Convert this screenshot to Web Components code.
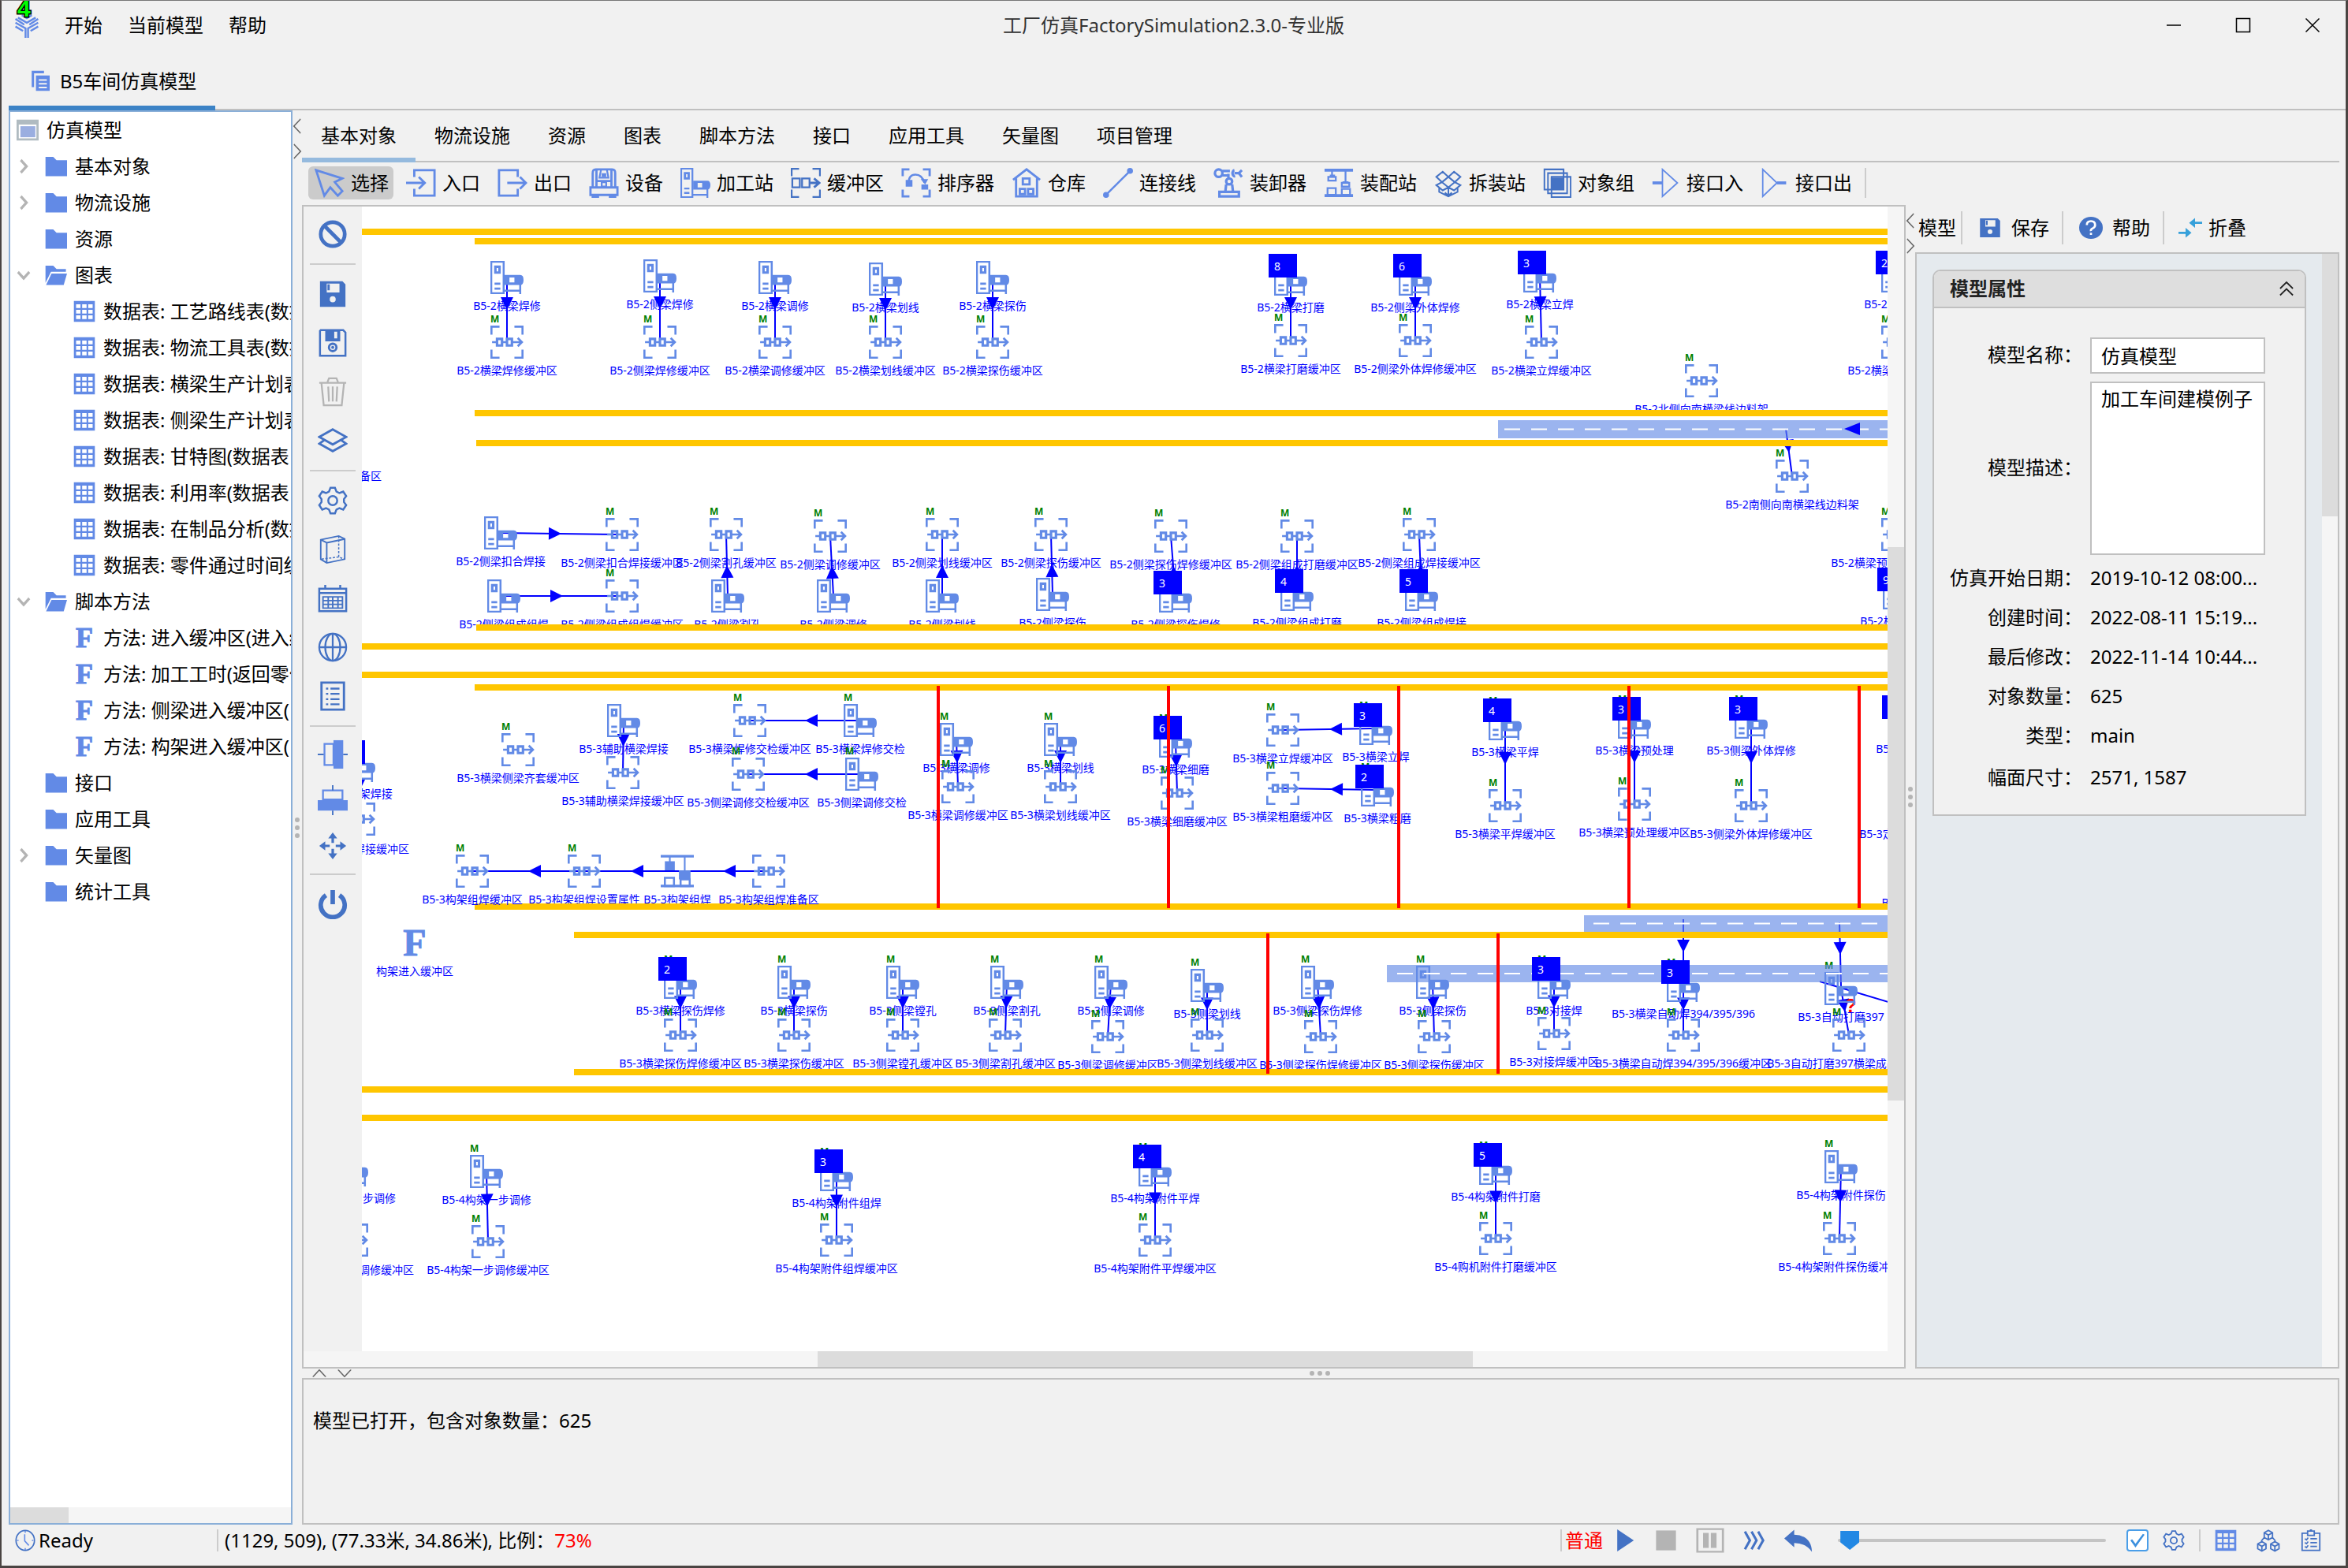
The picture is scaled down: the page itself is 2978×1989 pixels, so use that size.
<!DOCTYPE html>
<html lang="zh-CN">
<head>
<meta charset="utf-8">
<title>工厂仿真FactorySimulation2.3.0-专业版</title>
<style>
  html, body {
    margin: 0;
    height: 100%;
  }

  body {
    --line: #c0c0c0;
    --face: #f1f1f1;
    --blue: #628ae6;
    --navy: #4472c4;
    --thumb: #dcdcdc;
    --track: #f5f5f5;
    box-sizing: border-box;
    border: solid #4a4442;
    border-width: 1px 3px 3px 2px;
    border-top-color: #777;
    background: var(--face);
    color: #000;
    font: 24px/36px "Noto Sans", "Noto Sans CJK SC", sans-serif;
    overflow: hidden;
  }
</style>
</head>
<body>
<sim-app></sim-app>

<script>
const css = `
<style>
  *, *::before { box-sizing: border-box; }
  button {
    display: flex;
    align-items: center;
    padding: 0;
    border: none;
    background: none;
    font: inherit;
    color: inherit;
    white-space: nowrap;
  }
</style>
`

const define = (name, html, setup) => {
  customElements.define(name, class extends HTMLElement {
    connectedCallback () {
      if (this.shadowRoot) return
      this.attachShadow({ mode: 'open' })
      this.shadowRoot.innerHTML = css + (typeof html === 'function' ? html(this) : html)
      if (setup) setup(this, this.shadowRoot)
    }
  })
}

// icons are drawn in a 40x40 box, B = light blue, N = navy
const B = '#628ae6'
const N = '#4472c4'
const G = '#b4b4b4'
const line = (color, width, d) => `<path fill="none" stroke="${color}" stroke-width="${width}" d="${d}"/>`
const fill = (color, d) => `<path fill="${color}" fill-rule="evenodd" d="${d}"/>`

const machine = line(B, 2.4, 'M1 1H16V39H1Z') + line(B, 3, 'M6 7H11V14H6Z') + line(B, 2.6, 'M5 27.500H12M5 33.500H12') +
  fill(B, 'M17 17H36Q40 17 40 23T36 29H17ZM23 20V26H29V20Z') + line(B, 2.4, 'M36 28V40M16 36H37')
const corners = (color, width) => line(color, width, 'M1 11V1H11M29 1H39V11M39 29V39H29M11 39H1V29')
const gear = (color) => line(color, 2.6, 'M17 3H23L25 8L29 10L34 8L38 14L35 18V22L38 26L34 32L29 30L25 32L23 37H17L15 32L11 30L6 32L2 26L5 22V18L2 14L6 8L11 10L15 8Z') +
  `<circle cx="20" cy="20" r="6" fill="none" stroke="${color}" stroke-width="2.6"/>`
const grid = (color) => fill(color, 'M1 1H39V39H1ZM5 7V14H13V7ZM16 7V14H24V7ZM27 7V14H35V7ZM5 17V24H13V17ZM16 17V24H24V17ZM27 17V24H35V17ZM5 27V34H13V27ZM16 27V34H24V27ZM27 27V34H35V27Z')

const icons = {
  machine,
  station: machine,
  buffer: corners(B, 3) + line(B, 3, 'M8 16H14V24H8ZM20 16H26V24H20Z') + line(B, 2.6, 'M2 20H8M14 20H20M26 20H38M33 15L38 20L33 25'),
  zone: corners(N, 2.6) + line(N, 2.4, 'M2 14H12V26H2ZM15 14H25V26H15Z') + line(N, 3, 'M26 20H38M31 14L38 20L31 26'),
  assembly: line(B, 3, 'M0 2H40M0 38H40') + line(B, 2, 'M11 2V10M29 2V20') + fill(B, 'M5 8H17V19H5ZM22 19H36V30H22Z') + line(B, 2.4, 'M5 28H16V38H5ZM24 30H35V38H24Z'),
  select: line(B, 3, 'M2 3L37 14L27 19L37 31L31 37L21 26L13 37Z'),
  enter: line(B, 3, 'M11 12V3H38V37H11V28M0 20H25M17 12L25 20L17 28'),
  exit: line(B, 3, 'M27 12V3H2V37H27V28M13 20H38M30 12L38 20L30 28'),
  device: line(B, 3, 'M5 26V7Q5 2 9 2H31Q35 2 35 7V26M10 3V25M30 3V25M2 26H38V36H2ZM5 36V39H12V36M28 36V39H35V36') + line(B, 2.4, 'M16 3L14 13H26L24 3M17 19H23V25H17Z') + fill(B, 'M17 7H23V12H17ZM10 16H30V19H10Z'),
  sorter: line(B, 3, 'M2 11V2H11M29 2H38V11M38 29V38H29M11 38H2V29') + line(B, 2.6, 'M10 20Q10 9 19 9T31 20') + fill(B, 'M6 16H15V25H6ZM27 22H36V29H27ZM26 15L36 15L32 22Z'),
  store: line(B, 3, 'M2 16L20 2L38 16M6 14V38H34V14') + line(B, 3, 'M15 14H24V22H15ZM11 28H18V35H11ZM22 28H29V35H22Z'),
  link: line(B, 2.6, 'M4 36L36 4') + fill(B, 'M0 36a4 4 0 1 0 8 0a4 4 0 1 0-8 0M32 4a4 4 0 1 0 8 0a4 4 0 1 0-8 0'),
  loader: line(B, 3.4, 'M2 7a5 5 0 1 0 10 0a5 5 0 1 0-10 0M11 4H22M11 10H20M17 18a4 4 0 1 0 8 0a4 4 0 1 0-8 0M20 8V14M17 22L16 31M25 22L26 31M8 38H34V32H8ZM28 7H36M38 3L34 7L38 12M28 3a3 4 0 1 0 1 8'),
  fitting: line(B, 4, 'M1 3H39M1 37H39') + line(B, 2.4, 'M11 3V12M29 3V18M6 12H16V17H6ZM24 20H34V25H24ZM5 27H16V36H5ZM24 28H35V36H24Z') + fill(B, 'M8 9H15V13H8ZM25 18H33V21H25Z'),
  unpack: line(N, 2.2, 'M12 5L20 12L11 19L3 12ZM28 5L20 12L29 19L37 12ZM11 19L20 26L12 30L3 23ZM29 19L20 26L28 30L37 23ZM20 12L29 19L20 26L11 19ZM7 27V32L20 38L33 32V27M20 27V38M15 33L20 37L25 33'),
  group: line(N, 2.2, 'M2 2H29V29H2ZM7 7H34V34H7ZM12 12H39V39H12Z') + fill(N, 'M11 13H30V29H11Z'),
  portin: line(B, 2, 'M15 2V38L36 20Z') + line(B, 4, 'M1 20H15'),
  portout: line(B, 2, 'M3 2V38L23 20Z') + line(B, 4, 'M23 20H36'),
  folder: fill(B, 'M1 3H15L21 9H40V38H1Z'),
  open: fill(B, 'M1 3H15L21 9H38V14H11L1 34ZM12 17H40L34 38H2Z'),
  root: fill('#b0bbc1', 'M0 1H40V39H0ZM4 10V35H36V10Z') + fill('#9aaee0', 'M7 13H34V33H7Z'),
  table: grid(B),
  pages: fill(B, 'M2 1H28V6H7V32H2ZM11 10H40V39H11ZM17 17V20H34V17ZM17 24V27H34V24ZM17 31V34H34V31Z'),
  logo: line(B, 3, 'M18 40V25L2 16M22 40V25L38 16M2 10L16 19M38 10L24 19M2 22L14 29M38 22L26 29M6 8L20 16L34 8M12 4L20 9L28 4'),
  ban: `<circle cx="20" cy="20" r="16" fill="none" stroke="${N}" stroke-width="5"/>` + line(N, 5, 'M9 9L31 31'),
  disk: fill(N, 'M3 3H33L37 7V37H3ZM12 6V18H29V6ZM16 27a4 4 0 1 0 8 0a4 4 0 1 0-8 0') + fill(N, 'M13 7H16V15H13Z'),
  disk2: line(N, 2.6, 'M4 3H34L37 6V37H3V4Z') + fill(N, 'M10 3H30V18H10ZM22 5V14H26V5Z') + `<circle cx="20" cy="26" r="5" fill="none" stroke="${N}" stroke-width="3"/><circle cx="20" cy="26" r="2" fill="${N}"/>`,
  trash: line(G, 2.4, 'M2 8H38M13 7L15 2H25L27 7M5 9L8 38H32L35 9M14 13L15 33M20 13V33M26 13L25 33'),
  layers: line(N, 3, 'M20 5L38 15L20 25L2 15ZM9 19L2 24L20 34L38 24L31 19'),
  gear: gear(N),
  cube: line(N, 2, 'M4 7L28 2L36 6V33L12 38L4 33ZM4 7L12 11V38M12 11L36 6') + `<path fill="none" stroke="${N}" stroke-width="1.6" stroke-dasharray="3 2" d="M28 2V30L36 33M28 30L4 33"/>`,
  calendar: line(N, 2.6, 'M2 7H38V37H2ZM2 13H38M10 2V8M30 2V8') + line(N, 2, 'M7 18H33V33H7ZM7 23H33M7 28H33M14 18V33M20 18V33M27 18V33'),
  globe: `<g fill="none" stroke="${N}" stroke-width="2.4"><circle cx="20" cy="20" r="18"/><ellipse cx="20" cy="20" rx="10" ry="18"/><path d="M20 2V38M2 20H38"/></g>`,
  list: line(N, 3, 'M5 2H35V38H5Z') + line(N, 2.4, 'M11 10H14M17 10H29M11 17H14M17 17H29M11 24H14M17 24H29M11 31H14M17 31H29'),
  alignv: line(B, 2.4, 'M9 6H21V34H9Z') + fill(B, 'M21 1H34V39H21Z') + line(N, 2, 'M0 20H8M34 20H40'),
  alignh: line(B, 2.4, 'M7 7H33V19H7Z') + fill(B, 'M0 20H40V34H0Z') + line(N, 2, 'M20 0V7M20 34V40'),
  move: line(N, 3.4, 'M20 8V16M20 24V32M8 20H16M24 20H32') + fill(N, 'M20 2L26 10H14ZM20 38L26 30H14ZM2 20L10 14V26ZM38 20L30 14V26Z'),
  power: line(N, 6, 'M11 8A16 16 0 1 0 29 8M20 1V20'),
  help: `<circle cx="20" cy="20" r="20" fill="${N}"/>` + line('#fff', 3.6, 'M13 15Q13 8 20 8T27 15Q27 19 23 21T20 26M20 29V33'),
  fold: line('#36a0da', 4, 'M0 29H14M26 11H40') + fill('#36a0da', 'M12 20L22 29L12 38ZM28 2L18 11L28 20Z'),
  less: line('#666', 4, 'M34 2L6 20L34 38'),
  more: line('#666', 4, 'M6 2L34 20L6 38'),
  up: line('#666', 4, 'M2 38L20 3L38 38'),
  down: line('#666', 4, 'M2 2L20 37L38 2'),
  twist: line(G, 7, 'M12 4L28 20L12 36'),
  twistopen: line(G, 7, 'M4 12L20 28L36 12'),
  folds: line('#222', 4, 'M2 20L20 4L38 20M2 37L20 21L38 37'),
  min: line('#000', 3, 'M2 20H38'),
  max: line('#000', 3, 'M3 3H37V37H3Z'),
  close: line('#000', 3, 'M3 3L37 37M37 3L3 37'),
  clock: `<circle cx="20" cy="20" r="18" fill="none" stroke="${N}" stroke-width="2.600"/>` + line(B, 2.4, 'M19 9V21L27 29M20 3V6M20 34V37M4 20H7M33 20H36'),
  play: fill(N, 'M6 0L36 20L6 40Z'),
  stop: fill(G, 'M2 2H38V38H2Z'),
  pause: line(G, 3, 'M2 2H38V38H2Z') + fill(G, 'M10 8H18V32H10ZM21 8H29V32H21Z'),
  fast: line(N, 4.4, 'M3 4L12 20L3 36M15 4L24 20L15 36M27 4L36 20L27 36'),
  undo: fill(N, 'M0 17L14 3V11Q38 12 39 38Q30 24 14 24V31Z'),
  cubes: line(N, 2.4, 'M20 3L27 7V15L20 19L13 15V7ZM13 7L20 11L27 7M20 11V19M9 22L16 26V34L9 38L2 34V26ZM2 26L9 30L16 26M9 30V38M31 22L38 26V34L31 38L24 34V26ZM24 26L31 30L38 26M31 30V38M14 14L8 21M26 14L32 21'),
  clipboard: line(N, 2.6, 'M14 7H4V38H36V7H26M14 3H26V11H14ZM18 1H22') + line(N, 2.4, 'M9 17L12 19L15 15M19 17H31M9 24L12 26L15 22M19 24H31M9 31L12 33L15 29M19 31H31')
}

define('sim-icon', el => `
<style>
  :host { display: block; flex: none; width: 38px; height: 38px; }
  svg { display: block; width: 100%; height: 100%; }
</style>
<svg viewBox="0 0 40 40" preserveAspectRatio="none" aria-hidden="true">${icons[el.getAttribute('name')]}</svg>
`)

define('title-bar', `
<style>
  :host { display: grid; grid-template-columns: 1fr auto 1fr; align-items: center; height: 62px; position: relative; }
  nav, .window { display: flex; align-items: center; }
  nav { gap: 32px; padding-left: 16px; }
  .logo { width: 32px; height: 32px; }
  h1 { margin: 0; font: inherit; color: #333; }
  .window { justify-content: flex-end; gap: 68px; padding-right: 32px; }
  .window sim-icon { width: 20px; height: 20px; }
  .fps {
    position: absolute;
    left: 20px;
    top: -6px;
    font: bold 30px/32px "Liberation Sans", sans-serif;
    color: #0f0;
    -webkit-text-stroke: 3px #000;
    paint-order: stroke;
  }
</style>
<nav>
  <sim-icon class="logo" name="logo"></sim-icon>
  <button>开始</button><button>当前模型</button><button>帮助</button>
</nav>
<h1>工厂仿真FactorySimulation2.3.0-专业版</h1>
<div class="window">
  <button aria-label="最小化"><sim-icon name="min"></sim-icon></button>
  <button aria-label="最大化"><sim-icon name="max"></sim-icon></button>
  <button aria-label="关闭"><sim-icon name="close"></sim-icon></button>
</div>
<span class="fps">4</span>
`)

define('doc-tabs', `
<style>
  :host { display: flex; height: 77px; padding-left: 9px; }
  :host::after { content: ""; flex: 1; border-bottom: 2px solid var(--line); }
  button { gap: 13px; padding: 8px 24px 0 28px; border-bottom: 6px solid #3c83c6; }
  sim-icon { width: 24px; height: 27px; }
</style>
<button><sim-icon name="pages"></sim-icon><slot></slot></button>
`)

// a thin divider with two collapse arrows and a dotted grip
define('split-bar', el => {
  const row = el.hasAttribute('row')
  return `
<style>
  :host { display: flex; flex: none; align-items: center; position: relative; }
  :host { flex-direction: ${row ? 'row' : 'column'}; ${row ? 'height: 12px; padding-left: 13px; gap: 14px;' : 'padding-top: 10px; gap: 12px;'} }
  sim-icon { ${row ? 'width: 18px; height: 10px;' : 'width: 12px; height: 20px;'} }
  .grip { display: flex; flex-direction: inherit; gap: 4px; position: absolute; ${row ? 'left: calc(50% - 14px); top: 3px;' : 'top: 50%; left: 3px;'} }
  .grip i { width: 6px; height: 6px; border-radius: 3px; background: #b4b4b4; }
</style>
<button aria-label="收起"><sim-icon name="${row ? 'up' : 'less'}"></sim-icon></button>
<button aria-label="展开"><sim-icon name="${row ? 'down' : 'more'}"></sim-icon></button>
<span class="grip"><i></i><i></i><i></i></span>
`
})

// parts="before thumb after", in proportion
define('scroll-track', el => {
  const [before, thumb, after] = el.getAttribute('parts').split(' ')
  return `
<style>
  :host { display: flex; background: var(--track); }
  i { flex: ${before} 0 0; }
  i + i { flex: ${thumb} 0 0; background: var(--thumb); }
  i + i + i { flex: ${after} 0 0; background: none; }
</style>
<i></i><i></i><i></i>
`
})

const tree = [
  ['', 'folder', '基本对象', 'twist'],
  ['', 'folder', '物流设施', 'twist'],
  ['', 'folder', '资源'],
  ['', 'open', '图表', 'twistopen'],
  ['leaf', 'table', '数据表: 工艺路线表(数据'],
  ['leaf', 'table', '数据表: 物流工具表(数据'],
  ['leaf', 'table', '数据表: 横梁生产计划表'],
  ['leaf', 'table', '数据表: 侧梁生产计划表'],
  ['leaf', 'table', '数据表: 甘特图(数据表'],
  ['leaf', 'table', '数据表: 利用率(数据表'],
  ['leaf', 'table', '数据表: 在制品分析(数据'],
  ['leaf', 'table', '数据表: 零件通过时间统'],
  ['', 'open', '脚本方法', 'twistopen'],
  ['leaf', 'F', '方法: 进入缓冲区(进入缓'],
  ['leaf', 'F', '方法: 加工工时(返回零件'],
  ['leaf', 'F', '方法: 侧梁进入缓冲区('],
  ['leaf', 'F', '方法: 构架进入缓冲区('],
  ['', 'folder', '接口'],
  ['', 'folder', '应用工具'],
  ['', 'folder', '矢量图', 'twist'],
  ['', 'folder', '统计工具']
]

define('model-tree', `
<style>
  :host { display: flex; flex-direction: column; width: 360px; box-sizing: border-box; border: 2px solid #8aafd8; background: #fff; overflow: hidden; }
  ul { flex: 1; margin: 0; padding: 0; list-style: none; overflow: hidden; }
  li { display: flex; align-items: center; height: 46px; padding-left: 8px; white-space: nowrap; }
  li sim-icon { width: 28px; height: 28px; margin-right: 10px; }
  li .twist { width: 18px; height: 20px; margin: 0 18px 0 0; }
  .gap { flex: none; width: 36px; }
  .leaf { padding-left: 44px; }
  .f { flex: none; width: 28px; margin-right: 10px; text-align: center; font: bold 36px/36px "Liberation Serif", serif; color: var(--blue); -webkit-text-stroke: 1px var(--blue); }
  scroll-track { height: 20px; }
</style>
<ul role="tree">
  <li role="treeitem"><sim-icon name="root"></sim-icon>仿真模型</li>
  ${tree.map(([cls, icon, text, twist]) => `
  <li role="treeitem" class="${cls}">
    ${twist ? `<sim-icon class="twist" name="${twist}"></sim-icon>` : '<span class="gap"></span>'}
    ${icon === 'F' ? '<span class="f">F</span>' : `<sim-icon name="${icon}"></sim-icon>`}${text}
  </li>`).join('')}
</ul>
<scroll-track parts="0 74 282"></scroll-track>
`)

define('palette-tabs', `
<style>
  :host { display: flex; height: 66px; border-bottom: 2px solid var(--line); box-sizing: border-box; }
  button { padding: 4px 24px 0; border-bottom: 6px solid transparent; margin-bottom: -2px; }
  button[aria-selected=true] { border-color: #95bade; }
</style>
${['基本对象', '物流设施', '资源', '图表', '脚本方法', '接口', '应用工具', '矢量图', '项目管理'].map((t, i) => `<button role="tab" aria-selected="${i === 0}">${t}</button>`).join('')}
`)

const palette = [
  ['select', '选择'], ['enter', '入口'], ['exit', '出口'], ['device', '设备'], ['station', '加工站'],
  ['zone', '缓冲区'], ['sorter', '排序器'], ['store', '仓库'], ['link', '连接线'], ['loader', '装卸器'],
  ['fitting', '装配站'], ['unpack', '拆装站', 'slim'], ['group', '对象组', 'slim'], ['portin', '接口入', 'slim'], ['portout', '接口出', 'slim']
]

define('object-palette', `
<style>
  :host { display: flex; align-items: center; gap: 8px; height: 54px; padding: 0 0 2px 8px; box-sizing: border-box; }
  button { gap: 8px; height: 42px; padding: 0 6px 0 8px; border-radius: 6px; }
  button[aria-pressed=true] { background: #cbcbcb; }
  .slim { width: 36px; }
  hr { width: 2px; height: 38px; margin: 0 0 0 2px; border: none; background: #ccc; }
</style>
${palette.map(([icon, text, cls], i) => `<button aria-pressed="${i === 0}"><sim-icon class="${cls || ''}" name="${icon}"></sim-icon>${text}</button>`).join('')}
<hr>
`)

const rail = [
  ['ban', '取消'], null, ['disk', '保存'], ['disk2', '另存为'], ['trash', '删除'], ['layers', '图层'], null,
  ['gear', '设置'], ['cube', '三维'], ['calendar', '日历'], ['globe', '全局'], ['list', '列表'], null,
  ['alignv', '垂直对齐', 'tight'], ['alignh', '水平对齐', 'tight'], ['move', '移动', 'tight'], null, ['power', '退出']
]

define('tool-rail', `
<style>
  :host { display: flex; flex-direction: column; align-items: center; width: 74px; padding-top: 4px; box-sizing: border-box; background: var(--face); }
  button { height: 62px; }
  button.tight { height: 58px; }
  hr { width: 58px; height: 2px; margin: 6px 0; border: none; background: #ccc; }
</style>
${rail.map(r => r ? `<button class="${r[2] || ''}" aria-label="${r[1]}"><sim-icon name="${r[0]}"></sim-icon></button>` : '<hr>').join('')}
`)

// one object of the model: icon, caption, optional M mark and queue count
define('sim-node', el => {
  const kind = el.getAttribute('kind')
  const count = el.getAttribute('count')
  return `
<style>
  :host { position: absolute; display: flex; flex-direction: column; align-items: center; width: 42px; font-size: 14px; line-height: 20px; color: #00f; }
  sim-icon, .method { width: 42px; height: 42px; }
  .method { font: bold 48px/42px "Liberation Serif", serif; color: var(--blue); text-align: center; -webkit-text-stroke: 1px var(--blue); }
  .label { margin-top: 5px; white-space: nowrap; }
  :host([raised]) .label { position: relative; z-index: 2; }
  .mark { position: absolute; left: 0; top: -17px; font-size: 12px; line-height: 18px; font-weight: bold; color: green; }
  .count { position: absolute; z-index: 2; left: -7px; top: -11px; width: 36px; height: 30px; padding: 6px 0 0 7px; background: #00f; color: #fff; }
</style>
${el.hasAttribute('mark') ? '<span class="mark">M</span>' : ''}
${kind === 'method' ? '<span class="method">F</span>' : kind ? `<sim-icon name="${kind}"></sim-icon>` : ''}
${count !== null ? `<span class="count">${count}</span>` : ''}
<span class="label">${el.getAttribute('label') || ''}</span>
`
})

// where the plant drawing is scrolled to
const origin = { x: 459, y: 262 }

const m = (x, y, label, opt = {}) => ({ kind: 'machine', x, y, label, ...opt })
const b = (x, y, label, opt = {}) => ({ kind: 'buffer', x, y, label, mark: true, ...opt })
const M = { mark: true }
const n = count => ({ count })
const nm = count => ({ count, mark: true })

// from -> to
const links = [
  [m(622, 331, 'B5-2横梁焊修'), b(622, 413, 'B5-2横梁焊修缓冲区')],
  [m(816, 329, 'B5-2侧梁焊修'), b(816, 413, 'B5-2侧梁焊修缓冲区')],
  [m(962, 331, 'B5-2横梁调修'), b(962, 413, 'B5-2横梁调修缓冲区')],
  [m(1102, 333, 'B5-2横梁划线'), b(1102, 413, 'B5-2横梁划线缓冲区')],
  [m(1238, 331, 'B5-2横梁探伤'), b(1238, 413, 'B5-2横梁探伤缓冲区')],
  [m(1616, 333, 'B5-2横梁打磨', n(8)), b(1616, 411, 'B5-2横梁打磨缓冲区')],
  [m(1774, 333, 'B5-2侧梁外体焊修', n(6)), b(1774, 411, 'B5-2侧梁外体焊修缓冲区')],
  [m(1932, 329, 'B5-2横梁立焊', n(3)), b(1934, 413, 'B5-2横梁立焊缓冲区')],
  [m(2386, 329, 'B5-2横梁组焊', n(2)), b(2386, 413, 'B5-2横梁组焊缓冲区')],

  [m(614, 655, 'B5-2侧梁扣合焊接'), b(768, 657, 'B5-2侧梁扣合焊接缓冲区')],
  [m(618, 735, 'B5-2侧梁组成组焊'), b(768, 735, 'B5-2侧梁组成组焊缓冲区')],
  [m(902, 735, 'B5-2侧梁割孔'), b(900, 657, 'B5-2侧梁割孔缓冲区')],
  [m(1036, 735, 'B5-2侧梁调修'), b(1032, 659, 'B5-2侧梁调修缓冲区')],
  [m(1174, 735, 'B5-2侧梁划线'), b(1174, 657, 'B5-2侧梁划线缓冲区')],
  [m(1314, 733, 'B5-2侧梁探伤'), b(1312, 657, 'B5-2侧梁探伤缓冲区')],
  [m(1470, 735, 'B5-2侧梁探伤焊修', n(3)), b(1464, 659, 'B5-2侧梁探伤焊修缓冲区')],
  [m(1624, 733, 'B5-2侧梁组成打磨', n(4)), b(1624, 659, 'B5-2侧梁组成打磨缓冲区')],
  [m(1782, 733, 'B5-2侧梁组成焊接', n(5)), b(1779, 657, 'B5-2侧梁组成焊接缓冲区')],
  [m(2388, 731, 'B5-2横梁预处理', n(9)), b(2386, 657, 'B5-2横梁预处理打磨缓冲区')],

  [m(434, 950, 'B5-3构架焊接', n('')), b(434, 1018, '')],
  [m(770, 893, 'B5-3辅助横梁焊接'), b(769, 959, 'B5-3辅助横梁焊接缓冲区', { mark: false })],
  [m(1070, 893, 'B5-3横梁焊修交检', M), b(930, 893, 'B5-3横梁焊修交检缓冲区')],
  [m(1072, 961, 'B5-3侧梁调修交检', M), b(928, 961, 'B5-3侧梁调修交检缓冲区')],
  [m(1192, 917, 'B5-3横梁调修', M), b(1194, 977, 'B5-3横梁调修缓冲区')],
  [m(1324, 917, 'B5-3横梁划线', M), b(1324, 977, 'B5-3横梁划线缓冲区')],
  [m(1470, 919, 'B5-3横梁细磨', nm(6)), b(1472, 985, 'B5-3横梁细磨缓冲区')],
  [m(1724, 903, 'B5-3横梁立焊', nm(3)), b(1606, 905, 'B5-3横梁立焊缓冲区')],
  [m(1726, 981, 'B5-3横梁粗磨', nm(2)), b(1606, 979, 'B5-3横梁粗磨缓冲区')],
  [m(1888, 897, 'B5-3横梁平焊', nm(4)), b(1888, 1001, 'B5-3横梁平焊缓冲区')],
  [m(2052, 895, 'B5-3横梁预处理', nm(3)), b(2052, 999, 'B5-3横梁预处理缓冲区')],
  [m(2200, 895, 'B5-3侧梁外体焊修', nm(3)), b(2200, 1001, 'B5-3侧梁外体焊修缓冲区')],
  [m(2394, 893, 'B5-3定位焊', nm(4)), b(2394, 1001, 'B5-3定位焊缓冲区')],

  [m(842, 1225, 'B5-3横梁探伤焊修', nm(2)), b(842, 1292, 'B5-3横梁探伤焊修缓冲区')],
  [m(986, 1225, 'B5-3横梁探伤', M), b(986, 1292, 'B5-3横梁探伤缓冲区')],
  [m(1124, 1225, 'B5-3侧梁镗孔', M), b(1124, 1292, 'B5-3侧梁镗孔缓冲区')],
  [m(1256, 1225, 'B5-3侧梁割孔', M), b(1254, 1292, 'B5-3侧梁割孔缓冲区')],
  [m(1388, 1225, 'B5-3侧梁调修', M), b(1384, 1294, 'B5-3侧梁调修缓冲区')],
  [m(1510, 1229, 'B5-3侧梁划线', M), b(1510, 1292, 'B5-3侧梁划线缓冲区')],
  [m(1650, 1225, 'B5-3侧梁探伤焊修', M), b(1654, 1294, 'B5-3侧梁探伤焊修缓冲区')],
  [m(1796, 1225, 'B5-3侧梁探伤', M), b(1798, 1294, 'B5-3侧梁探伤缓冲区')],
  [m(1950, 1225, 'B5-3对接焊', nm(3)), b(1950, 1290, 'B5-3对接焊缓冲区')],
  [m(2114, 1229, 'B5-3横梁自动焊394/395/396', nm(3)), b(2114, 1292, 'B5-3横梁自动焊394/395/396缓冲区')],
  [m(2314, 1233, 'B5-3自动打磨397', M), b(2324, 1292, 'B5-3自动打磨397横梁成品缓冲区')],

  [m(425, 1463, ''), b(425, 1552, '')],
  [m(596, 1465, 'B5-4构架一步调修', M), b(598, 1554, 'B5-4构架一步调修缓冲区')],
  [m(1040, 1469, 'B5-4构架附件组焊', nm(3)), b(1040, 1552, 'B5-4构架附件组焊缓冲区')],
  [m(1444, 1463, 'B5-4构架附件平焊', nm(4)), b(1444, 1552, 'B5-4构架附件平焊缓冲区')],
  [m(1876, 1461, 'B5-4构架附件打磨', nm(5)), b(1876, 1550, 'B5-4购机附件打磨缓冲区')],
  [m(2314, 1459, 'B5-4构架附件探伤', M), b(2312, 1550, 'B5-4构架附件探伤缓冲区')]
]

// the frame line runs right to left
const frame = [
  b(954, 1084, 'B5-3构架组焊准备区', { mark: false, raised: true }),
  { kind: 'assembly', x: 838, y: 1084, label: 'B5-3构架组焊' },
  b(720, 1084, 'B5-3构架组焊设置属性'),
  b(578, 1084, 'B5-3构架组焊缓冲区', { raised: true })
]
const frameLinks = frame.slice(1).map((to, i) => [frame[i], to])

const loose = [
  b(2137, 462, 'B5-2北侧向南横梁线边料架'),
  b(2252, 583, 'B5-2南侧向南横梁线边料架'),
  b(636, 930, 'B5-3横梁侧梁齐套缓冲区'),
  { kind: 'method', x: 505, y: 1175, label: '构架进入缓冲区' },
  // captions of objects that are scrolled out of sight
  { x: 449, y: 589, label: '备区' },
  { x: 463, y: 1062, label: '焊接缓冲区' },
  { x: 460, y: 1505, label: '步调修' },
  { x: 469, y: 1596, label: '调修缓冲区' },
  { x: 2370, y: 1130, label: 'B' }
]

const bars = [
  [459, 290], [602, 302], [602, 520], [604, 558], [604, 792], [459, 816], [459, 852],
  [602, 868], [602, 1146], [728, 1182], [728, 1356], [459, 1378], [459, 1414]
]
const roads = [[1900, 533, 23, 8], [2009, 1161, 21, 12], [1759, 1224, 22, 13]]
const walls = [
  [1188, 870, 282], [1480, 870, 282], [1772, 870, 282], [2064, 870, 282], [2356, 870, 282],
  [1606, 1184, 178], [1898, 1184, 178]
]

const arrow = (x1, y1, x2, y2) => {
  // the head ends half way along
  const angle = Math.atan2(y2 - y1, x2 - x1) * 180 / Math.PI
  return `<path d="M${x1} ${y1}L${x2} ${y2}" stroke="#00f" stroke-width="2"/>
    <path d="M0 0L-16-8V8Z" fill="#00f" transform="translate(${(x1 + x2) / 2} ${(y1 + y2) / 2}) rotate(${angle})"/>`
}

define('plant-canvas', `
<style>
  :host { display: block; position: relative; overflow: hidden; background: #fff; isolation: isolate; }
  svg { position: absolute; left: 0; top: 0; width: 100%; height: 100%; }
  .over { z-index: 1; }
  .walls { z-index: 3; }
  .alert { position: absolute; font: bold 24px/24px "Liberation Sans", sans-serif; color: red; }
</style>
<svg><g transform="translate(${-origin.x} ${-origin.y})">
  ${[...links, ...frameLinks].map(([a, z]) => arrow(a.x + 21, a.y + 21, z.x + 21, z.y + 21)).join('')}
  ${arrow(2265, 544, 2273, 604)}${arrow(2135, 1166, 2135, 1250)}${arrow(2333, 1170, 2335, 1252)}
  <path d="M2308 1245L2395 1271" stroke="#00f" stroke-width="2"/>
</g></svg>
<svg class="over"><g transform="translate(${-origin.x} ${-origin.y})">
  ${roads.map(([x, y, h, dash]) => `<rect x="${x}" y="${y}" width="4000" height="${h}" fill="#628ae6" fill-opacity=".64"/>
  <path d="M${x + dash} ${y + h / 2}H4000" stroke="#fff" stroke-width="2" stroke-dasharray="20 14"/>`).join('')}
  <path d="M2339 544L2359 536V552Z" fill="#00f"/>
  ${bars.map(([x, y]) => `<rect x="${x}" y="${y}" width="4000" height="8" fill="#ffc600"/>`).join('')}
</g></svg>
<svg class="walls"><g transform="translate(${-origin.x} ${-origin.y})">
  ${walls.map(([x, y, h]) => `<rect x="${x}" y="${y}" width="4" height="${h}" fill="red"/>`).join('')}
</g></svg>
<span class="alert" style="left: ${2340 - origin.x}px; top: ${1264 - origin.y}px">?</span>
`, (el, root) => {
  for (const o of [...links.flat(), ...frame, ...loose]) {
    const node = document.createElement('sim-node')
    for (const key of ['kind', 'label', 'count']) {
      if (o[key] !== undefined) node.setAttribute(key, o[key])
    }
    node.toggleAttribute('mark', !!o.mark)
    node.toggleAttribute('raised', !!o.raised)
    node.style.left = `${o.x - origin.x}px`
    node.style.top = `${o.y - origin.y}px`
    root.append(node)
  }
})

define('model-view', `
<style>
  :host { display: grid; grid-template: minmax(0, 1fr) 20px / auto minmax(0, 1fr) 21px; border: 2px solid var(--line); min-width: 0; }
  .v { flex-direction: column; }
  .h { grid-column: 1 / -1; }
</style>
<tool-rail></tool-rail>
<plant-canvas></plant-canvas>
<scroll-track class="v" parts="432 702 318"></scroll-track>
<scroll-track class="h" parts="652 832 547"></scroll-track>
`)

define('property-panel', `
<style>
  :host { display: flex; flex-direction: column; width: 538px; }
  header { display: flex; align-items: center; height: 60px; padding: 0 0 2px 4px; }
  header button { gap: 12px; padding: 0 16px 0 20px; border-left: 2px solid #ccc; height: 42px; }
  header button sim-icon { width: 30px; height: 28px; }
  header button:last-child { gap: 8px; padding-left: 18px; }
  header span { margin-right: 6px; }
  .body { flex: 1; display: flex; border: 2px solid var(--line); background: #e5eaee; }
  .scroll { flex: 1; padding: 20px; }
  section { border: 2px solid var(--line); border-radius: 10px 10px 0 0; background: var(--face); }
  h2 { display: flex; justify-content: space-between; align-items: center; height: 47px; margin: 0; padding: 0 14px 2px 20px; border-bottom: 2px solid var(--line); border-radius: 8px 8px 0 0; background: #dedede; font: inherit; font-weight: bold; color: #222; }
  h2 sim-icon { width: 18px; height: 20px; }
  form { display: grid; grid-template-columns: 168px minmax(0, 222px); grid-template-rows: 46px 220px repeat(5, 40px) 46px; gap: 10px; align-items: center; padding: 37px 20px 23px; }
  label, .name, output { padding-bottom: 2px; white-space: nowrap; }
  label, .name { text-align: right; }
  input, textarea { width: 100%; height: 100%; padding: 2px 12px 4px; border: 2px solid var(--line); background: #fff; font: inherit; color: inherit; resize: none; outline: none; }
  textarea { overflow: hidden; display: block; }
  scroll-track { width: 20px; flex-direction: column; }
</style>
<header>
  <span>模型</span>
  <button><sim-icon name="disk"></sim-icon>保存</button>
  <button><sim-icon name="help"></sim-icon>帮助</button>
  <button><sim-icon name="fold"></sim-icon>折叠</button>
</header>
<div class="body">
  <div class="scroll">
    <section>
      <h2>模型属性<button aria-label="收起"><sim-icon name="folds"></sim-icon></button></h2>
      <form>
        <label for="name">模型名称：</label><input id="name" value="仿真模型">
        <label for="note">模型描述：</label><textarea id="note">加工车间建模例子</textarea>
        <span class="name">仿真开始日期：</span><output>2019-10-12 08:00...</output>
        <span class="name">创建时间：</span><output>2022-08-11 15:19...</output>
        <span class="name">最后修改：</span><output>2022-11-14 10:44...</output>
        <span class="name">对象数量：</span><output>625</output>
        <span class="name">类型：</span><output>main</output>
        <span class="name">幅面尺寸：</span><output>2571, 1587</output>
      </form>
    </section>
  </div>
  <scroll-track parts="0 333 1080"></scroll-track>
</div>
`)

define('log-panel', `
<style>
  :host { display: block; height: 186px; box-sizing: border-box; padding: 34px 12px; border: 2px solid var(--line); }
</style>
<slot></slot>
`)

define('status-bar', `
<style>
  :host { display: flex; align-items: center; height: 52px; padding: 0 30px 12px 17px; box-sizing: border-box; white-space: nowrap; }
  .ready { display: flex; align-items: center; gap: 4px; width: 256px; }
  .ready sim-icon { width: 26px; height: 28px; }
  .where { border-left: 2px solid #ccc; padding-left: 8px; line-height: 28px; }
  .hot { color: red; }
  .run, .tools { display: flex; align-items: center; }
  .run { margin-left: auto; }
  .run button { margin-right: 24px; }
  .run .mode { margin-right: 14px; border-left: 2px solid #ccc; padding-left: 4px; line-height: 28px; }
  sim-icon { width: 28px; height: 28px; }
  .wide { width: 36px; height: 32px; }
  input[type=range] { appearance: none; width: 340px; height: 24px; margin: 0 26px 0 8px; background: none; }
  input[type=range]::-webkit-slider-runnable-track { height: 4px; border-radius: 2px; background: #c4c4c4; }
  input[type=range]::-webkit-slider-thumb { appearance: none; width: 24px; height: 24px; margin-top: -10px; background: #2288e4; clip-path: polygon(0 0, 100% 0, 100% 60%, 50% 100%, 0 60%); }
  input[type=checkbox] { appearance: none; display: grid; place-items: center; width: 28px; height: 28px; margin: 0; border: 2px solid #4a9ee8; border-radius: 4px; background: #fff; }
  input[type=checkbox]::before { content: ""; width: 18px; height: 18px; background: #3c90de; clip-path: polygon(0 50%, 12% 42%, 36% 74%, 88% 4%, 100% 10%, 36% 100%); }
  .tools { gap: 18px; }
  .tools hr { width: 2px; height: 28px; margin: 0; border: none; background: #ccc; }
  .tools .big { width: 30px; height: 30px; margin: 0 7px; }
</style>
<span class="ready"><sim-icon name="clock"></sim-icon>Ready</span>
<span class="where">(1129, 509), (77.33米, 34.86米), 比例：<span class="hot">73%</span></span>
<div class="run">
  <span class="mode hot">普通</span>
  <button aria-label="运行"><sim-icon name="play"></sim-icon></button>
  <button aria-label="停止"><sim-icon name="stop"></sim-icon></button>
  <button aria-label="暂停"><sim-icon class="wide" name="pause"></sim-icon></button>
  <button aria-label="快进"><sim-icon name="fast"></sim-icon></button>
  <button aria-label="复位"><sim-icon class="wide" name="undo"></sim-icon></button>
  <input type="range" min="0" max="100" value="1" aria-label="速度">
</div>
<div class="tools">
  <input type="checkbox" checked aria-label="动画">
  <button aria-label="设置"><sim-icon name="gear"></sim-icon></button>
  <hr>
  <button aria-label="表格"><sim-icon name="table"></sim-icon></button>
  <button aria-label="对象"><sim-icon class="big" name="cubes"></sim-icon></button>
  <button aria-label="任务"><sim-icon name="clipboard"></sim-icon></button>
</div>
`)

define('sim-app', `
<style>
  :host { display: flex; flex-direction: column; height: 100%; }
  main { flex: 1; display: flex; min-height: 0; padding: 0 8px 0 9px; }
  main > split-bar, .work > split-bar { width: 12px; }
  .right { flex: 1; display: flex; flex-direction: column; min-width: 0; }
  .work { flex: 1; display: flex; min-height: 0; }
  .work > model-view { flex: 1; }
</style>
<title-bar></title-bar>
<doc-tabs>B5车间仿真模型</doc-tabs>
<main>
  <model-tree></model-tree>
  <split-bar></split-bar>
  <div class="right">
    <palette-tabs></palette-tabs>
    <object-palette></object-palette>
    <div class="work">
      <model-view></model-view>
      <split-bar></split-bar>
      <property-panel></property-panel>
    </div>
    <split-bar row></split-bar>
    <log-panel>模型已打开，包含对象数量：625</log-panel>
  </div>
</main>
<status-bar></status-bar>
`)
</script>
</body>
</html>
